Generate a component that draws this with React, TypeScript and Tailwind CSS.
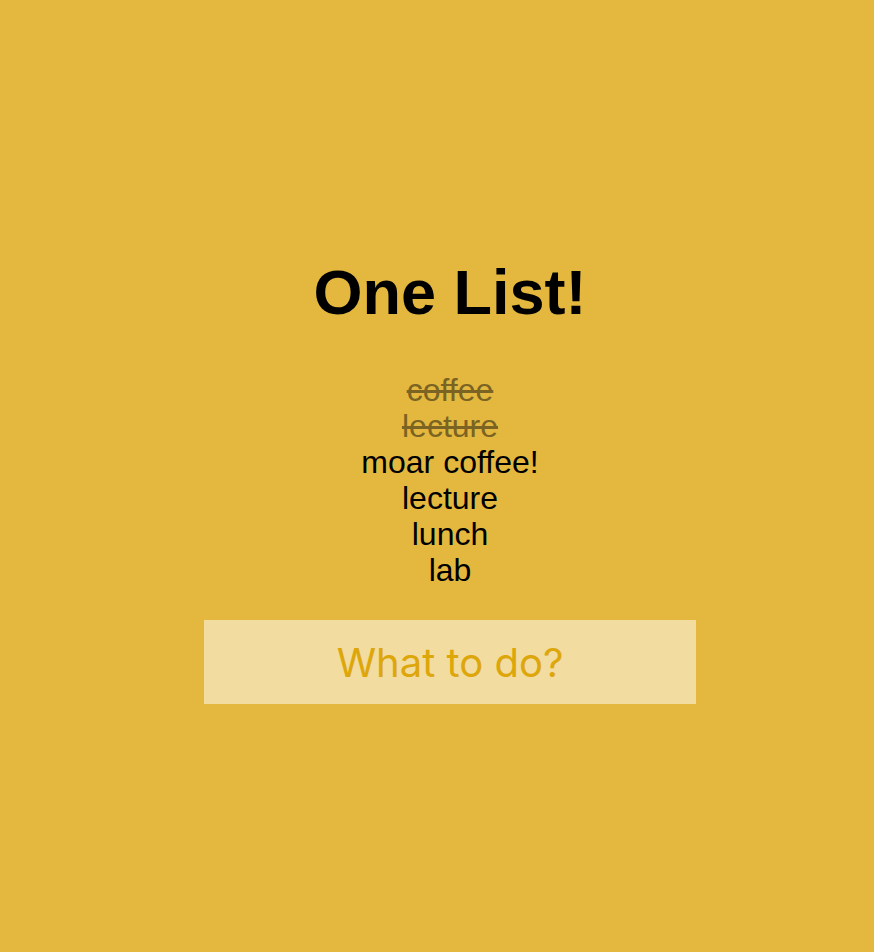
import { useState } from "react";

type Todo = {
  id: number;
  text: string;
  done: boolean;
};

const TODOS: Todo[] = [
  { id: 1, text: "coffee", done: true },
  { id: 2, text: "lecture", done: true },
  { id: 3, text: "moar coffee!", done: false },
  { id: 4, text: "lecture", done: false },
  { id: 5, text: "lunch", done: false },
  { id: 6, text: "lab", done: false },
];

export default function App() {
  const [todos, setTodos] = useState<Todo[]>(TODOS);
  const [draft, setDraft] = useState("");

  const toggle = (id: number) =>
    setTodos((prev) => prev.map((t) => (t.id === id ? { ...t, done: !t.done } : t)));

  return (
    <div className="min-h-[952px] w-full bg-[#e4b83e] pl-[26px] pt-[261px] font-['Liberation_Sans',Arial,sans-serif]">
      <div className="flex flex-col items-center">
        {/* Title */}
        <h1 className="text-[63px] font-bold leading-none text-black">One List!</h1>

        {/* Todo items */}
        <ul className="mt-[48px] flex flex-col items-center">
          {todos.map((todo) => (
            <li
              key={todo.id}
              onClick={() => toggle(todo.id)}
              className={`cursor-pointer text-[32px] leading-[36px] ${
                todo.done ? "text-[#7a6323] line-through" : "text-black"
              }`}
            >
              {todo.text}
            </li>
          ))}
        </ul>

        {/* New todo */}
        <form
          className="mt-[32px]"
          onSubmit={(e) => {
            e.preventDefault();
            if (!draft.trim()) return;
            setTodos((prev) => [...prev, { id: Date.now(), text: draft, done: false }]);
            setDraft("");
          }}
        >
          <input
            value={draft}
            onChange={(e) => setDraft(e.target.value)}
            placeholder="What to do?"
            className="h-[84px] w-[492px] bg-white/50 text-center font-['Inter',sans-serif] text-[40px] font-normal text-[#dda60b] outline-none placeholder:text-[#dda60b]"
          />
        </form>
      </div>
    </div>
  );
}
